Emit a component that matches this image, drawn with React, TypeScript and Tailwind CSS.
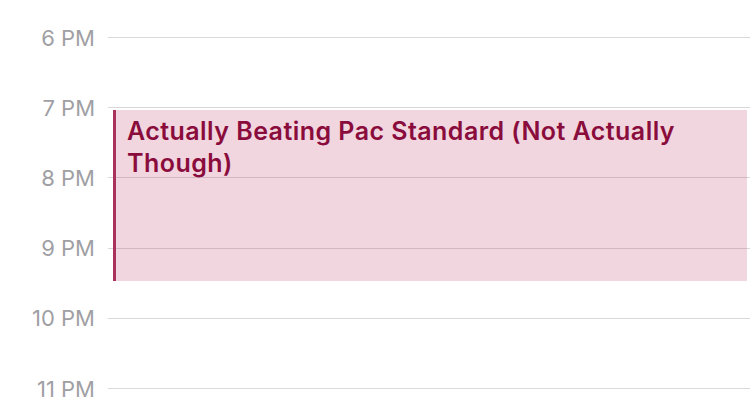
const hours = ["6 PM", "7 PM", "8 PM", "9 PM", "10 PM", "11 PM"];

function HourRow({ label }: { label: string }) {
  return (
    <div className="flex h-[70.2px] items-center">
      <div className="w-[95px] text-right text-[22px] leading-none text-[#9f9fa4]">{label}</div>
      <div className="ml-[13px] h-px flex-1 bg-[#d9d9dc]" />
    </div>
  );
}

export default function App() {
  return (
    <div
      className="relative h-[405px] w-[750px] overflow-hidden bg-white pt-[2.5px]"
      style={{ fontFamily: "Inter, 'Noto Sans', sans-serif" }}
    >
      {hours.map((h) => (
        <HourRow key={h} label={h} />
      ))}

      {/* event block sits over the hour grid */}
      <div className="absolute left-[113px] top-[110px] h-[171px] w-[634px] border-l-[3px] border-[#a8325c] bg-[#b8325f]/20 pl-[11px] pr-3 pt-[5px]">
        <div className="text-[25px] font-semibold leading-[32px] tracking-[0.45px] text-[#8a0c3c]">
          Actually Beating Pac Standard (Not Actually Though)
        </div>
      </div>
    </div>
  );
}
